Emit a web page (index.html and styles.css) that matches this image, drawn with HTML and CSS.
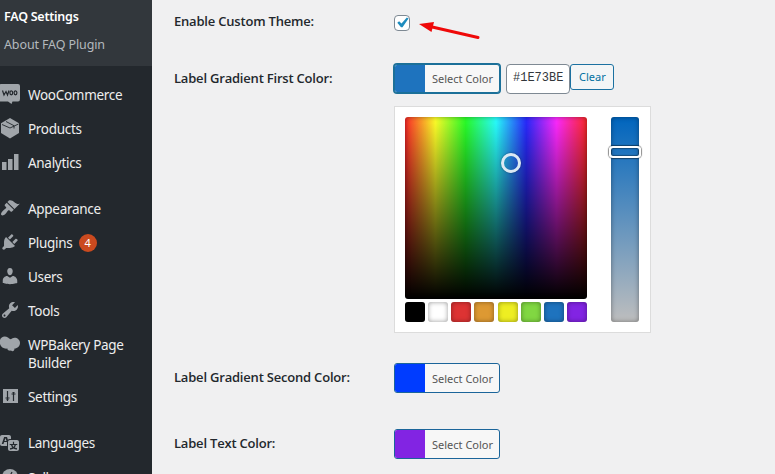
FILE: index.html
```html
<!DOCTYPE html>
<html lang="en">
<head>
<meta charset="utf-8">
<title>FAQ Settings</title>
<link rel="stylesheet" href="styles.css">
</head>
<body>
<div class="app">
  <nav class="sidebar">
    <div class="submenu">
      <a class="sub current">FAQ Settings</a>
      <a class="sub">About FAQ Plugin</a>
    </div>
    <div class="menu">
      <a class="item"><svg class="icon" viewBox="0 0 20 20"><path d="M-1 1.500Q-1 0 1 0H18Q20 0 20 2V15Q20 17.500 18 17.500H12.500L11.500 20 8 17.500H-1Z"/><path class="ink" d="M2.500 6.500 4 11 6 7.500 7.500 11 9 6.500"/><ellipse class="ink" cx="11.300" cy="8.800" rx="1.400" ry="2"/><ellipse class="ink" cx="15.500" cy="8.800" rx="1.400" ry="2"/></svg><span>WooCommerce</span></a>
      <a class="item"><svg class="icon" viewBox="0 0 20 20"><path d="M10 0 19 5.300V15L10 20.500 1 15V5.300Z"/><path class="ink thin" d="M2 6.500 10 10 18.500 6M6 3.500 14 7.700V10.500"/></svg><span>Products</span></a>
      <a class="item"><svg class="icon" viewBox="0 0 20 20"><path d="M2 10H6.500V18H2ZM8 7H12.500V18H8ZM14 2H18.500V18H14Z"/></svg><span>Analytics</span></a>
      <a class="item gap"><svg class="icon" viewBox="0 0 20 20"><path d="M14.480 11.060L7.410 3.990l1.500-1.500c.5-.56 2.300-.47 3.510.32 1.210.8 1.430 1.280 2.910 2.100 1.180.64 2.450 1.260 4.450.85zm-.71.71L6.700 4.700 4.930 6.470c-.39.39-.39 1.020 0 1.410l1.060 1.060c.39.39.39 1.030 0 1.420-.6.6-1.430 1.110-2.210 1.690-.35.26-.7.53-1.010.84C1.430 14.230.4 16.080 1.400 17.070c.99 1 2.840-.03 4.180-1.360.31-.31.58-.66.85-1.020.57-.78 1.080-1.610 1.690-2.210.39-.39 1.020-.39 1.410 0l1.060 1.060c.39.39 1.020.39 1.410 0z"/></svg><span>Appearance</span></a>
      <a class="item"><svg class="icon" viewBox="0 0 20 20"><path d="M13.110 4.360L9.870 7.600 8 5.730l3.240-3.240c.35-.34 1.050-.2 1.560.32.52.51.66 1.210.31 1.550zm-8 1.770l.91-1.120 9.010 9.010-1.190.84c-.71.71-2.630 1.160-3.820 1.160H6.140L4.900 17.260c-.59.59-1.540.59-2.120 0-.59-.58-.59-1.530 0-2.120l1.240-1.240v-3.880c0-1.130.4-3.190 1.090-3.890zm7.260 3.970l3.240-3.240c.34-.35 1.040-.21 1.550.31.52.51.66 1.210.31 1.550l-3.240 3.250z"/></svg><span>Plugins</span><span class="count">4</span></a>
      <a class="item"><svg class="icon" viewBox="0 0 20 20"><path d="M10 9.250c-2.270 0-2.730-3.440-2.730-3.440C7 4.020 7.820 2 9.970 2c2.160 0 2.980 2.020 2.710 3.810 0 0-.41 3.440-2.680 3.440zm0 2.570L12.720 10c2.390 0 4.520 2.330 4.520 4.530v2.490s-3.650 1.130-7.240 1.130c-3.650 0-7.240-1.130-7.240-1.130v-2.490c0-2.250 1.940-4.480 4.470-4.480z"/></svg><span>Users</span></a>
      <a class="item"><svg class="icon" viewBox="0 0 20 20"><path d="M16.680 9.770c-1.340 1.340-3.300 1.670-4.950.99l-5.410 6.520c-.99.99-2.590.99-3.580 0s-.99-2.590 0-3.570l6.520-5.420c-.68-1.650-.35-3.610.99-4.950 1.280-1.280 3.120-1.620 4.720-1.060l-2.890 2.890 2.820 2.820 2.860-2.870c.53 1.580.18 3.390-1.080 4.650zM3.810 16.210c.4.39 1.040.39 1.430 0 .4-.4.4-1.040 0-1.430-.39-.4-1.030-.4-1.430 0-.39.39-.39 1.030 0 1.430z"/></svg><span>Tools</span></a>
      <a class="item"><svg class="icon" viewBox="0 0 20 20"><path d="M0 6C1 2.500 5 1.500 8 3.500 10 5 10.500 6 12 4.500 15 2.500 20 4.500 20 9 20 12 17.500 14.500 14.500 14.500 14.500 17 12.500 18 11 16.500 9.500 17 7 16 7.500 14.500 3 15.500-1.500 11 0 6Z"/></svg><span>WPBakery Page<br>Builder</span></a>
      <a class="item"><svg class="icon" viewBox="0 0 20 20"><path d="M3 3H18V17H3Z"/><path class="ink" d="M7.500 5V15M5.500 12H9.500M6.500 13.500H8.500M13.500 6V15M11.500 8H15.500M12.500 6.500H14.500"/></svg><span>Settings</span></a>
      <a class="item gap"><svg class="icon" viewBox="0 0 20 20"><path d="M11 7H9.490c-.63 0-1.250.3-1.590.7L7 5H4.130l-2.390 7h1.690l.74-2H7v4H2c-1.100 0-2-.9-2-2V5c0-1.100.9-2 2-2h7c1.100 0 2 .9 2 2v2zM6.510 9H4.490l1-2.930zM10 8h7c1.100 0 2 .9 2 2v7c0 1.100-.9 2-2 2h-7c-1.100 0-2-.9-2-2v-7c0-1.100.9-2 2-2zm7.250 5v-1.080h-3.170V9.750h-1.160v2.170H9.750V13h1.280c.11.85.56 1.850 1.280 2.620-.87.36-1.890.62-2.310.62-.01.02.22.97.2 1.460.84 0 2.210-.5 3.280-1.150 1.090.65 2.480 1.150 3.340 1.150-.02-.49.2-1.440.2-1.460-.43 0-1.490-.27-2.380-.63.7-.77 1.140-1.770 1.250-2.610h1.360zm-3.810 1.930c-.5-.46-.85-1.130-1.010-1.930h2.090c-.17.8-.51 1.470-1 1.930l-.04.03s-.03-.02-.04-.03z"/></svg><span>Languages</span></a>
      <a class="item last"><svg class="icon" viewBox="0 0 20 20"><circle cx="10" cy="10" r="8"/><path class="ink" d="M12 5 9 11H12L9 15"/></svg><span>Seller</span></a>
    </div>
  </nav>
  <main class="form">
    <div class="row r1">
      <div class="label">Enable Custom Theme:</div>
      <div class="check"><svg viewBox="0 0 20 20"><path d="M14.830 4.390l1.700 1.200-6.010 8.620H9.020L5.280 9.870l1.840-1.650 2.370 2.400z"/></svg></div>
      <svg class="arrow" viewBox="0 0 64 24"><path class="shaft" d="M12 6.500 60 17.500"/><path class="head" d="M1 4 16 2 13.500 12Z"/></svg>
    </div>
    <div class="row r2">
      <div class="label">Label Gradient First Color:</div>
      <div class="picker">
        <div class="controls">
          <div class="select focused"><i class="chip blue"></i><span>Select Color</span></div>
          <div class="hex">#1E73BE</div>
          <div class="clear">Clear</div>
        </div>
        <div class="iris">
          <div class="left">
            <div class="square"><i class="ring"></i></div>
            <div class="palette"><i class="p1"></i><i class="p2"></i><i class="p3"></i><i class="p4"></i><i class="p5"></i><i class="p6"></i><i class="p7"></i><i class="p8"></i></div>
          </div>
          <div class="strip"><i class="handle"></i></div>
        </div>
      </div>
    </div>
    <div class="row r3">
      <div class="label">Label Gradient Second Color:</div>
      <div class="select"><i class="chip royal"></i><span>Select Color</span></div>
    </div>
    <div class="row r4">
      <div class="label">Label Text Color:</div>
      <div class="select"><i class="chip violet"></i><span>Select Color</span></div>
    </div>
  </main>
</div>
</body>
</html>
```
FILE: styles.css
```css
* { box-sizing: border-box; }
body { margin: 0; background: #f0f0f1; font-family: "Noto Sans", "Open Sans", sans-serif; }
.app { display: flex; width: 775px; height: 474px; overflow: hidden; }
span { white-space: nowrap; }

.sidebar { width: 152px; flex: none; background: #23282d; color: #eee; overflow: hidden; }
.submenu { height: 66px; background: #32373c; padding: 3px 0 0 4px; }
.sub { display: block; height: 28px; line-height: 28px; font-size: 12.500px; letter-spacing: -.12px; color: #b4b9be; }
.sub.current { color: #fff; font-weight: 600; letter-spacing: -.25px; }
.menu { padding-top: 12px; }
.item { display: flex; align-items: flex-start; min-height: 34.200px; padding: 8px 0; font-size: 13.500px; letter-spacing: -.3px; line-height: 18px; }
.item.gap { margin-top: 11px; }
.icon { width: 20px; height: 20px; margin: -2px 8px 0 0; flex: none; fill: #a0a5aa; overflow: visible; }
.ink { fill: none; stroke: #23282d; stroke-width: 1.200; }
.thin { stroke-width: .9; }
.last { padding-top: 9px; }
.count { width: 18px; height: 18px; margin-left: 6px; border-radius: 50%; background: #ca4a1f; color: #fff; font-size: 11px; line-height: 18px; text-align: center; }

.form { flex: 1; padding-left: 22px; color: #23282d; }
.row { display: flex; align-items: flex-start; }
.label { width: 220px; flex: none; font-family: "Open Sans", "Noto Sans", sans-serif; font-size: 13px; font-weight: 600; line-height: 20px; letter-spacing: -.2px; }
.r1 { height: 63px; padding-top: 11px; }
.r2 { height: 300px; }
.r2 .label { padding-top: 5px; }
.r3 .label, .r4 .label { padding-top: 4px; }
.r3 { height: 66px; }
.check { width: 16px; height: 16px; margin-top: 4px; border: 1px solid #7e8993; border-radius: 4px; background: #fff; }
.check svg { display: block; width: 20px; height: 20px; margin: -3px; fill: #1e8cbe; }
.arrow { width: 64px; height: 24px; margin: 9px 0 0 8px; }
.shaft { stroke: #ef0909; stroke-width: 3; stroke-linecap: round; }
.head { fill: #ef0909; }

.controls { display: flex; align-items: flex-start; height: 43px; }
.select { display: flex; width: 106px; height: 30px; border: 1px solid #1b659a; border-radius: 3px; background: #f7f7f7; color: #555; font-size: 11px; line-height: 29px; overflow: hidden; }
.select.focused { height: 29px; margin-top: 1px; line-height: 27px; box-shadow: 0 0 0 1px #1b7099; border-color: #1b7099; }
.chip { width: 30px; flex: none; margin-right: 7px; }
.blue { background: #1e73be; }
.royal { background: #003cff; }
.violet { background: #8224e3; }
.hex { width: 64px; height: 30px; margin: 1px 0 0 6px; border: 1px solid #7e8993; border-radius: 4px; background: #fff; color: #32373c; font: 12px/27px "Liberation Mono", monospace; padding-left: 6px; }
.clear { width: 44px; height: 26px; margin-top: 1px; border: 1px solid #1b71a1; border-radius: 3px; background: #f3f5f6; color: #0071a1; font-size: 11px; line-height: 24px; padding-left: 8px; }

.iris { display: flex; justify-content: space-between; width: 257px; height: 227px; padding: 10px 11px 10px 10px; border: 1px solid #dcdcdc; background: #fff; }
.left { width: 182px; }
.square { position: relative; width: 182px; height: 182px; border-radius: 3px; box-shadow: inset 0 0 5px rgba(0,0,0,.4); background: linear-gradient(to bottom, transparent, #000), linear-gradient(to right, #ff2929, #ffff29, #29ff29, #29ffff, #2929ff, #ff29ff, #ff2929); }
.ring { position: absolute; left: 96px; top: 36px; width: 20px; height: 20px; border: 3px solid #dce9f3; border-radius: 50%; box-shadow: 0 0 2px rgba(0,0,0,.5); }
.palette { display: flex; justify-content: space-between; margin-top: 3px; }
.palette i { width: 20px; height: 20px; border-radius: 3px; box-shadow: inset 0 0 5px rgba(0,0,0,.4); }
.p1 { background: #000; }
.p2 { background: #fff; }
.p3 { background: #dd3333; }
.p4 { background: #dd9933; }
.p5 { background: #eeee22; }
.p6 { background: #81d742; }
.p7 { background: #1e73be; }
.p8 { background: #8224e3; }
.strip { position: relative; width: 28px; height: 205px; border-radius: 3px; box-shadow: inset 0 0 5px rgba(0,0,0,.4); background: linear-gradient(to bottom, #0065be, #bebebe); }
.handle { position: absolute; left: -2px; top: 29px; width: 32px; height: 12px; border: 2.500px solid #fff; border-radius: 4px; box-shadow: 0 0 1px 1px rgba(0,0,0,.45), inset 0 0 1px 1px rgba(0,0,0,.35); }
```
